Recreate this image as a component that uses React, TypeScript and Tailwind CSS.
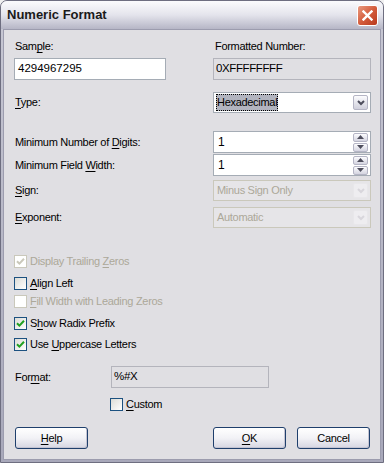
import React from 'react';

const font = { fontFamily: '"Liberation Sans", Arial, sans-serif' };

function U({ children }: { children: React.ReactNode }) {
  return <span className="underline underline-offset-[2px]">{children}</span>;
}

function Check({ checked, disabled }: { checked?: boolean; disabled?: boolean }) {
  return (
    <span
      className={`w-[13px] h-[13px] border flex items-center justify-center shrink-0 ${
        disabled ? 'border-[#cac8bb] bg-white' : 'border-[#1c5180] bg-gradient-to-br from-[#dcdcd7] to-white'
      }`}
    >
      {checked && (
        <svg width="9" height="9" viewBox="0 0 9 9">
          <path d="M1 4.2 L3.4 6.6 L8 1.8" stroke={disabled ? '#cac8bb' : '#21a121'} strokeWidth="2" fill="none" />
        </svg>
      )}
    </span>
  );
}

function SpinBtn({ up }: { up?: boolean }) {
  return (
    <span className="w-[15px] h-[9px] rounded-[2px] border border-[#b5b5c5] bg-gradient-to-b from-[#fcfcfe] to-[#d4d4e0] flex items-center justify-center">
      <svg width="7" height="4" viewBox="0 0 7 4">
        <path d={up ? 'M0 4 L3.5 0 L7 4 Z' : 'M0 0 L3.5 4 L7 0 Z'} fill="#4d4d5c" />
      </svg>
    </span>
  );
}

function Spin({ value }: { value: string }) {
  return (
    <div className="w-[158px] h-[22px] border border-[#a5acb5] bg-white flex items-center pl-[4px] pr-[2px] text-[12px] text-black">
      <span className="flex-1">{value}</span>
      <div className="flex flex-col gap-[1px]">
        <SpinBtn up />
        <SpinBtn />
      </div>
    </div>
  );
}

function Select({ value, disabled, selected }: { value: string; disabled?: boolean; selected?: boolean }) {
  return (
    <div
      className={`w-[158px] h-[21px] border flex items-center pl-[2px] pr-[2px] ${
        disabled ? 'border-[#cac8bb] bg-[#e6e5e8] text-[#aca899]' : 'border-[#a5acb5] bg-white text-black'
      }`}
    >
      <span className="flex-1 flex">
        {selected ? (
          <span className="bg-[#b2b4bf] px-[1px] outline outline-1 outline-dotted outline-black -outline-offset-1">{value}</span>
        ) : (
          <span className="px-[1px]">{value}</span>
        )}
      </span>
      <span
        className={`w-[15px] h-[15px] rounded-[2px] border flex items-center justify-center ${
          disabled ? 'border-[#e8e7ea] bg-[#eeedf0]' : 'border-[#b5b5c5] bg-gradient-to-b from-[#fcfcfe] to-[#d0d0dc]'
        }`}
      >
        <svg width="8" height="6" viewBox="0 0 8 6">
          <path d="M1 1 L4 4 L7 1" stroke={disabled ? '#d8d6dc' : '#4d4d5c'} strokeWidth="2" fill="none" />
        </svg>
      </span>
    </div>
  );
}

function Btn({ children }: { children: React.ReactNode }) {
  return (
    <div className="w-[73px] h-[22px] rounded-[3px] border border-[#1f3f6c] bg-gradient-to-b from-white via-[#f2f2f6] to-[#d6d6e2] flex items-center justify-center text-black shadow-[inset_-1px_-1px_0_#c4c4d2]">
      {children}
    </div>
  );
}

function CheckRow({ mt, checked, disabled, children }: { mt: string; checked?: boolean; disabled?: boolean; children: React.ReactNode }) {
  return (
    <div className={`flex items-center h-[13px] gap-[3px] ${mt} ${disabled ? 'text-[#aca899]' : 'text-black'}`}>
      <Check checked={checked} disabled={disabled} />
      <span className="leading-[13px]">{children}</span>
    </div>
  );
}

export default function App() {
  return (
    <div style={font} className="w-[384px] h-[463px] bg-[#f0f0f0] text-[11px] tracking-[-0.3px]">
      <div className="w-[384px] h-[463px] rounded-t-[7px] border border-[#6e6e80] bg-gradient-to-b from-[#c8c8d4] to-[#a8a8ba] flex flex-col overflow-hidden">
        {/* Title bar */}
        <div className="h-[28px] shrink-0 bg-gradient-to-b from-[#fbfbfd] via-[#e4e4ec] to-[#b6b6c6] flex items-center pl-[6px] pr-[5px]">
          <span className="flex-1 text-[13px] font-bold text-[#1a1a1a] tracking-[0px]">Numeric Format</span>
          <div className="w-[21px] h-[21px] rounded-[3px] border border-white bg-gradient-to-br from-[#e89a80] via-[#d45c3c] to-[#b8381c] flex items-center justify-center">
            <svg width="11" height="11" viewBox="0 0 11 11">
              <path d="M1.5 1.5 L9.5 9.5 M9.5 1.5 L1.5 9.5" stroke="white" strokeWidth="2.4" strokeLinecap="square" />
            </svg>
          </div>
        </div>

        {/* Client area */}
        <div className="flex-1 mx-[2px] mb-[2px] border border-[#9c9cae] bg-[#e0dfe3] pl-[10px] text-black">
          {/* Sample / Formatted */}
          <div className="flex mt-[10px] h-[13px] leading-[13px]">
            <span className="w-[199px] pl-[1px]">
              Sam<U>p</U>le:
            </span>
            <span className="pl-[2px]">Formatted Number:</span>
          </div>
          <div className="flex mt-[5px]">
            <div className="w-[199px]">
              <div className="w-[152px] h-[22px] border border-[#a5acb5] bg-white flex items-center pl-[3px] text-[11.5px] tracking-[0px]">4294967295</div>
            </div>
            <div className="w-[158px] h-[22px] border border-[#b4b4bc] flex items-center pl-[2px] text-[11.5px] tracking-[-0.4px]">0XFFFFFFFF</div>
          </div>

          {/* Type */}
          <div className="flex items-center mt-[12px]">
            <span className="w-[199px] pl-[1px]">
              <U>T</U>ype:
            </span>
            <Select value="Hexadecimal" selected />
          </div>

          <div className="flex items-center mt-[18px]">
            <span className="w-[199px] pl-[1px]">
              Minimum Number of <U>D</U>igits:
            </span>
            <Spin value="1" />
          </div>
          <div className="flex items-center mt-[1px]">
            <span className="w-[199px] pl-[1px]">
              Minimum Field <U>W</U>idth:
            </span>
            <Spin value="1" />
          </div>
          <div className="flex items-center mt-[4px]">
            <span className="w-[199px] pl-[1px]">
              <U>S</U>ign:
            </span>
            <Select value="Minus Sign Only" disabled />
          </div>
          <div className="flex items-center mt-[6px]">
            <span className="w-[199px] pl-[1px]">
              <U>E</U>xponent:
            </span>
            <Select value="Automatic" disabled />
          </div>

          {/* Options */}
          <CheckRow mt="mt-[27px]" checked disabled>
            Display Trailing <U>Z</U>eros
          </CheckRow>
          <CheckRow mt="mt-[9px]">
            <U>A</U>lign Left
          </CheckRow>
          <CheckRow mt="mt-[5px]" disabled>
            <U>F</U>ill Width with Leading Zeros
          </CheckRow>
          <CheckRow mt="mt-[9px]" checked>
            S<U>h</U>ow Radix Prefix
          </CheckRow>
          <CheckRow mt="mt-[8px]" checked>
            Use <U>U</U>ppercase Letters
          </CheckRow>

          {/* Format */}
          <div className="flex items-center mt-[15px]">
            <span className="w-[97px] pl-[1px]">
              For<U>m</U>at:
            </span>
            <div className="w-[158px] h-[22px] border border-[#b4b4bc] flex items-center pl-[2px] text-[11.5px]">%#X</div>
          </div>
          <div className="flex items-center h-[13px] mt-[10px] ml-[96px] gap-[3px]">
            <Check />
            <span>
              <U>C</U>ustom
            </span>
          </div>

          {/* Buttons */}
          <div className="flex mt-[16px] pl-[1px]">
            <div className="w-[198px]">
              <Btn>
                <U>H</U>elp
              </Btn>
            </div>
            <div className="flex gap-[11px]">
              <Btn>
                <U>O</U>K
              </Btn>
              <Btn>Cancel</Btn>
            </div>
          </div>
        </div>
      </div>
    </div>
  );
}
